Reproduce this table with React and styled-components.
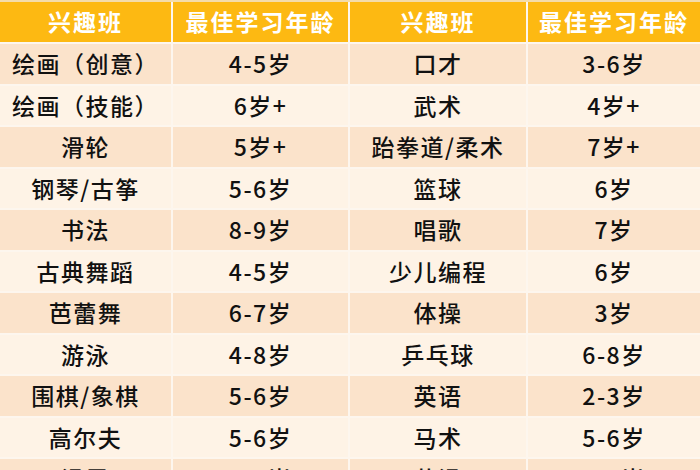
import React from "react";
import styled, { createGlobalStyle } from "styled-components";

const GlobalStyle = createGlobalStyle`
    html, body {
        margin: 0;
        padding: 0;
        background: #ffffff;
        overflow: hidden;
    }
`;

const StyledTable = styled.div`
    width: 700px;
    height: 470px;
    overflow: hidden;
    display: grid;
    grid-template-columns: 171px 175px 176px 1fr;
    grid-auto-rows: 39.5px;
    grid-template-rows: 40px;
    column-gap: 2px;
    row-gap: 2px;
    background-color: #fdf6ee;
    border-top: 2px solid #f4dcaa;
    box-sizing: border-box;
    font-family: "Noto Sans CJK SC", "Noto Sans", sans-serif;
`;

const StyledHeaderCell = styled.div`
    display: flex;
    align-items: center;
    justify-content: center;
    background-color: #fdb912;
    color: #ffffff;
    font-size: 23px;
    font-weight: 700;
    letter-spacing: 2px;
    margin-top: -2px;
`;

const StyledCell = styled.div`
    display: flex;
    align-items: center;
    justify-content: center;
    background-color: ${(props) => (props.dark ? "#fbe3cb" : "#fef3e6")};
    color: #111111;
    font-size: 23px;
    font-weight: 500;
    letter-spacing: 1.5px;
    line-height: 1;
    white-space: nowrap;
`;

const rows = [
    ["绘画（创意）", "4-5岁", "口才", "3-6岁"],
    ["绘画（技能）", "6岁+", "武术", "4岁+"],
    ["滑轮", "5岁+", "跆拳道/柔术", "7岁+"],
    ["钢琴/古筝", "5-6岁", "篮球", "6岁"],
    ["书法", "8-9岁", "唱歌", "7岁"],
    ["古典舞蹈", "4-5岁", "少儿编程", "6岁"],
    ["芭蕾舞", "6-7岁", "体操", "3岁"],
    ["游泳", "4-8岁", "乒乓球", "6-8岁"],
    ["围棋/象棋", "5-6岁", "英语", "2-3岁"],
    ["高尔夫", "5-6岁", "马术", "5-6岁"],
    ["滑雪", "4-5岁", "花滑", "4-6岁"],
];

const headers = ["兴趣班", "最佳学习年龄", "兴趣班", "最佳学习年龄"];

const App = () => {
    return (
        <>
            <GlobalStyle />
            <StyledTable>
                {headers.map((text, i) => (
                    <StyledHeaderCell key={"h" + i}>{text}</StyledHeaderCell>
                ))}
                {rows.map((row, r) =>
                    row.map((text, c) => (
                        <StyledCell key={r + "-" + c} dark={r % 2 === 0}>
                            {text}
                        </StyledCell>
                    )),
                )}
            </StyledTable>
        </>
    );
};

export default App;
